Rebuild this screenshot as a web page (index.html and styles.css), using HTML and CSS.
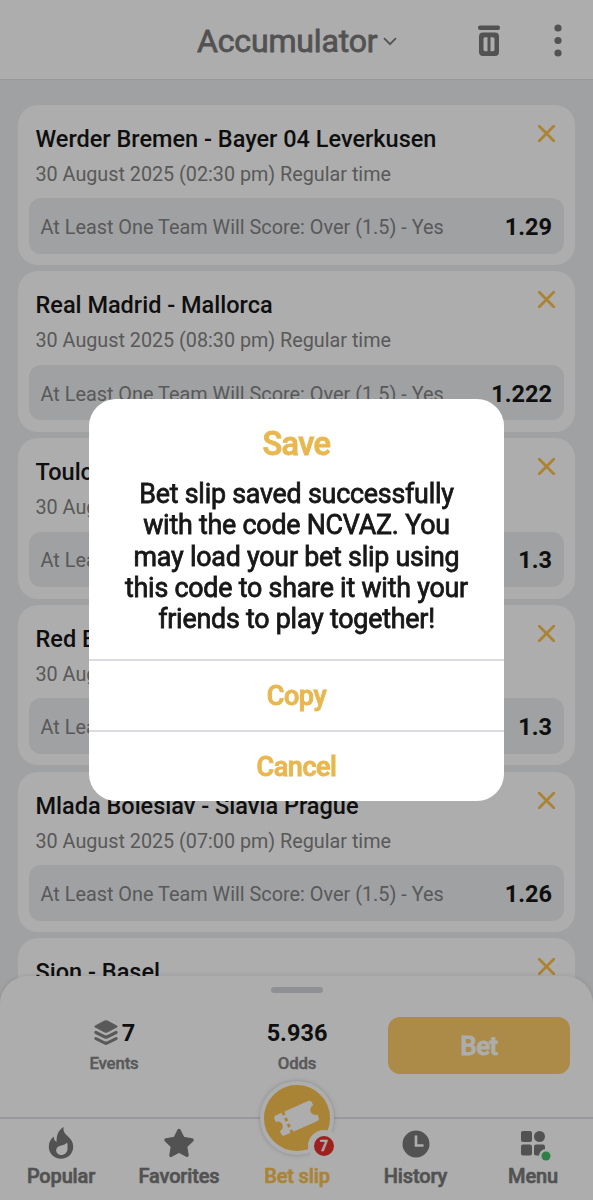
FILE: index.html
```html
<!DOCTYPE html>
<html lang="en">
<head>
    <meta charset="UTF-8">
    <title>Bet slip</title>
    <link rel="stylesheet" href="styles.css">
</head>
<body>
    <div class="app">
        <header class="topbar">
            <h1><span>Accumulator</span>
                <svg class="chevron" width="14" height="9" viewBox="0 0 14 9"><path d="M1 1.2l6 6 6-6" fill="none" stroke="currentColor" stroke-width="1.7"/></svg>
            </h1>
            <svg class="trash" width="22" height="32" viewBox="0 0 22 32"><rect x="0" y="0.5" width="22" height="4.5" rx="2"/><path fill-rule="evenodd" d="M5 7.500h12a4 4 0 0 1 4 4V27a4 4 0 0 1-4 4H5a4 4 0 0 1-4-4V11.500a4 4 0 0 1 4-4zM5.500 14v10.500a1.700 1.700 0 0 0 1.700 1.700H9.500V12.200H7.200A1.700 1.700 0 0 0 5.500 14zM12.500 12.200v14h2.300a1.700 1.700 0 0 0 1.700-1.700V14a1.700 1.700 0 0 0-1.700-1.800z"/></svg>
            <svg class="dots" width="8" height="33" viewBox="0 0 8 33"><circle cx="4" cy="4" r="3.600"/><circle cx="4" cy="16.500" r="3.600"/><circle cx="4" cy="29" r="3.600"/></svg>
        </header>

        <main class="list">
            <div class="card">
                <div class="card-top">
                    <h2>Werder Bremen - Bayer 04 Leverkusen</h2>
                    <svg class="close" viewBox="0 0 16 16"><path d="M1 1l14 14M15 1L1 15"/></svg>
                </div>
                <p class="date">30 August 2025 (02:30 pm) Regular time</p>
                <div class="pick"><span>At Least One Team Will Score: Over (1.5) - Yes</span><b>1.29</b></div>
            </div>
            <div class="card">
                <div class="card-top">
                    <h2>Real Madrid - Mallorca</h2>
                    <svg class="close" viewBox="0 0 16 16"><path d="M1 1l14 14M15 1L1 15"/></svg>
                </div>
                <p class="date">30 August 2025 (08:30 pm) Regular time</p>
                <div class="pick"><span>At Least One Team Will Score: Over (1.5) - Yes</span><b>1.222</b></div>
            </div>
            <div class="card">
                <div class="card-top">
                    <h2>Toulouse</h2>
                    <svg class="close" viewBox="0 0 16 16"><path d="M1 1l14 14M15 1L1 15"/></svg>
                </div>
                <p class="date">30 August</p>
                <div class="pick"><span>At Least</span><b>1.3</b></div>
            </div>
            <div class="card">
                <div class="card-top">
                    <h2>Red Bull</h2>
                    <svg class="close" viewBox="0 0 16 16"><path d="M1 1l14 14M15 1L1 15"/></svg>
                </div>
                <p class="date">30 August</p>
                <div class="pick"><span>At Least</span><b>1.3</b></div>
            </div>
            <div class="card">
                <div class="card-top">
                    <h2>Mlada Boleslav - Slavia Prague</h2>
                    <svg class="close" viewBox="0 0 16 16"><path d="M1 1l14 14M15 1L1 15"/></svg>
                </div>
                <p class="date">30 August 2025 (07:00 pm) Regular time</p>
                <div class="pick"><span>At Least One Team Will Score: Over (1.5) - Yes</span><b>1.26</b></div>
            </div>
            <div class="card">
                <div class="card-top">
                    <h2>Sion - Basel</h2>
                    <svg class="close" viewBox="0 0 16 16"><path d="M1 1l14 14M15 1L1 15"/></svg>
                </div>
            </div>
        </main>

        <footer class="sheet">
            <div class="handle"></div>
            <div class="summary">
                <div class="total">
                    <div class="value">
                        <svg width="24" height="25" viewBox="0 0 24 25"><path d="M10.500.6q1.500-.7 3 0l9.300 4.900q1.500 1 0 2l-9.300 4.900q-1.500.7-3 0L1.200 7.500q-1.500-1 0-2z"/><path d="M1 11q.8-.4 1.600 0l8 4q1.400.6 2.800 0l8-4q.8-.4 1.600 0 1.600 1.600-.3 2.900l-9.200 4.500q-1.500.7-3 0l-9.200-4.500Q-.6 12.600 1 11z"/><path d="M1 17.200q.8-.4 1.600 0l8 4q1.400.6 2.800 0l8-4q.8-.4 1.600 0 1.600 1.600-.3 2.900l-9.200 4.500q-1.500.7-3 0l-9.200-4.500Q-.6 18.800 1 17.200z"/></svg>
                        <b>7</b>
                    </div>
                    <span>Events</span>
                </div>
                <div class="total odds">
                    <div class="value"><b>5.936</b></div>
                    <span>Odds</span>
                </div>
                <button class="bet">Bet</button>
            </div>
            <nav class="tabs">
                <div class="tab">
                    <svg width="26" height="33" viewBox="0 0 26 33"><path fill-rule="evenodd" d="M15.500 0c-.4 4 .8 6 3.500 8.500 3.800 3.500 6.200 6.300 6.200 11.200 0 7-5.300 12-12.200 12S.8 26.500.8 19.800c0-4.500 2-8 5-10.300 0 2.700.8 4.500 2.800 5.500C8.300 8 10.500 3.200 15.500 0zM19 15.500c-2 2.500-4 2.700-6.500 3.200-3.200.7-4.600 2.700-4.300 5.300.3 2.300 2.300 4 5 4 3.500 0 6.300-2.500 6.300-6.500 0-2.300.3-4-.5-6z"/></svg>
                    <span>Popular</span>
                </div>
                <div class="tab">
                    <svg width="32" height="32" viewBox="0 0 32 32"><path d="M16 2.500l4 8.100 9 1.300-6.500 6.400 1.500 9L16 23l-8 4.300 1.500-9L3 11.900l9-1.300z" stroke="currentColor" stroke-width="3.500" stroke-linejoin="round"/></svg>
                    <span>Favorites</span>
                </div>
                <div class="tab active">
                    <div class="slip">
                        <svg width="66" height="66" viewBox="0 0 66 66"><g transform="rotate(-24 33 33)"><path d="M12 25q0-3 3-3H50q3 0 3 3v3a5 5 0 0 0 0 10v3q0 3-3 3H15q-3 0-3-3v-3a5 5 0 0 0 0-10z"/><path class="seam" d="M22.500 21.500v24"/></g></svg>
                        <span class="badge">7</span>
                    </div>
                    <span>Bet slip</span>
                </div>
                <div class="tab">
                    <svg width="28" height="30" viewBox="0 0 28 30"><circle cx="14" cy="14" r="13.500"/><path d="M14 5.500v10h7.500" fill="none" stroke="#fff" stroke-width="2.600"/></svg>
                    <span>History</span>
                </div>
                <div class="tab">
                    <svg class="menu-icon" width="24" height="30" viewBox="0 0 24 30"><rect x="0" y="1" width="11" height="11" rx="2"/><circle cx="18.500" cy="6.500" r="5.500"/><rect x="0" y="14.500" width="11" height="11" rx="2"/><rect x="13" y="14.500" width="11" height="11" rx="2"/><circle cx="25" cy="26" r="7" fill="#fff"/><circle cx="25" cy="26" r="4.500" fill="#43bd67"/></svg>
                    <span>Menu</span>
                </div>
            </nav>
        </footer>
    </div>

    <div class="overlay">
        <div class="modal">
            <h3>Save</h3>
            <p>Bet slip saved successfully<br>with the code NCVAZ. You<br>may load your bet slip using<br>this code to share it with your<br>friends to play together!</p>
            <button>Copy</button>
            <button>Cancel</button>
        </div>
    </div>
</body>
</html>
```
FILE: styles.css
```css
*{
    box-sizing: border-box;
}
body{
    margin: 0;
    font-family: Roboto, "Liberation Sans", sans-serif;
    color: #171717;
}
h1, h2, h3, p{
    margin: 0;
    white-space: nowrap;
}
svg{
    display: block;
    fill: currentColor;
    flex: none;
}
button{
    border: 0;
    padding: 0;
    font-family: inherit;
}
.app{
    position: relative;
    height: 1200px;
    overflow: hidden;
    background: #ebedf0;
}

/* top bar */
.topbar{
    display: flex;
    align-items: center;
    height: 80px;
    padding: 2px 31px 0 197px;
    background: #fff;
    border-bottom: 1px solid #e2e2e4;
    color: #7a7a7a;
}
.topbar h1{
    display: flex;
    align-items: center;
    gap: 5px;
    font-size: 32px;
    font-weight: 400;
    letter-spacing: -0.15px;
    -webkit-text-stroke: 0.8px;
}
.chevron{
    margin-top: 2px;
    -webkit-text-stroke: 0;
}
.trash{
    margin-left: auto;
    margin-right: 54px;
}

/* events */
.list{
    display: flex;
    flex-direction: column;
    gap: 6.3px;
    padding: 24.5px 18px 0 17.5px;
}
.card{
    flex: none;
    height: 160.5px;
    padding: 17px 11px 11px;
    border-radius: 20px;
    background: #fff;
}
.card-top{
    display: flex;
    justify-content: space-between;
    height: 36px;
    padding: 0 9px 0 7px;
}
.card h2{
    font-size: 23.5px;
    line-height: 35.4px;
    font-weight: 500;
}
.close{
    width: 17px;
    height: 17px;
    margin-top: 3px;
    fill: none;
    stroke: #fdc14a;
    stroke-width: 2.6;
    stroke-linecap: round;
}
.date{
    padding-left: 7px;
    height: 40.5px;
    font-size: 19.75px;
    line-height: 34.4px;
    color: #848484;
}
.pick{
    display: flex;
    align-items: center;
    justify-content: space-between;
    height: 55.5px;
    padding: 2px 12px 0;
    border-radius: 12px;
    background: #ebedf0;
    font-size: 19.85px;
    color: #848484;
    white-space: nowrap;
}
.pick span{
    padding-top: 1px;
}
.pick b{
    font-size: 23.5px;
    color: #171717;
}

/* bottom sheet */
.sheet{
    position: absolute;
    left: 0;
    right: 0;
    bottom: 0;
    height: 224px;
    border-radius: 28px 28px 0 0;
    background: #fff;
    box-shadow: 0 0 5px rgba(0, 0, 0, 0.12);
}
.handle{
    width: 52px;
    height: 6px;
    margin: 0 auto;
    border-radius: 3px;
    background: #d2d5dc;
    transform: translateY(11px);
}
.summary{
    display: flex;
    height: 135px;
    padding: 34.5px 23px 0 22px;
}
.total{
    width: 184px;
    text-align: center;
    font-size: 16.8px;
    font-weight: 500;
    color: #848484;
    letter-spacing: -0.15px;
    -webkit-text-stroke: 0.4px;
}
.odds{
    width: 182px;
}
.value{
    display: flex;
    align-items: center;
    justify-content: center;
    gap: 4px;
    height: 33px;
    margin-bottom: 3px;
    letter-spacing: 0;
    -webkit-text-stroke: 0;
}
.value svg{
    margin-top: -2px;
    margin-left: 1px;
}
.value b{
    font-size: 23.5px;
    color: #171717;
}
.bet{
    width: 182px;
    height: 57px;
    margin-left: auto;
    padding-top: 1px;
    border-radius: 12px;
    background: #fecc6b;
    color: #fff;
    font-size: 26px;
    font-weight: 500;
    letter-spacing: -0.5px;
    -webkit-text-stroke: 0.9px;
}
.tabs{
    display: grid;
    grid-template-columns: 122px 114px 122px 115px 120px;
    grid-template-rows: 80px;
    height: 83px;
    border-top: 2px solid #dfe2e9;
}
.tab{
    display: flex;
    flex-direction: column;
    align-items: center;
    justify-content: flex-end;
    padding-bottom: 11.5px;
    color: #7a7a7a;
    font-size: 20px;
    font-weight: 500;
    line-height: 24px;
    letter-spacing: -0.15px;
    white-space: nowrap;
    -webkit-text-stroke: 0.6px;
}
.tab > svg{
    margin-bottom: 4px;
    -webkit-text-stroke: 0;
}
.menu-icon{
    overflow: visible;
}
.active{
    color: #f9c350;
}
.slip{
    position: relative;
    margin-bottom: 9px;
    border: 4px solid #fff;
    border-radius: 50%;
    background: #f9c350;
    color: #fff;
    box-shadow: 0 0 4px rgba(90, 100, 120, 0.35);
}
.seam{
    fill: none;
    stroke: #f9c350;
    stroke-width: 3;
    stroke-dasharray: 3.6 3;
}
.badge{
    position: absolute;
    right: -10px;
    bottom: -11px;
    width: 32px;
    height: 32px;
    border: 6px solid #fff;
    border-radius: 50%;
    background: #e8312f;
    font-size: 14px;
    line-height: 21px;
    text-align: center;
}

/* saved dialog */
.overlay{
    position: fixed;
    inset: 0;
    display: flex;
    align-items: center;
    justify-content: center;
    background: rgba(0, 0, 0, 0.32);
}
.modal{
    width: 415px;
    height: 402px;
    overflow: hidden;
    border-radius: 27px;
    background: #fff;
    text-align: center;
}
.modal h3{
    padding-top: 26px;
    font-size: 32.5px;
    line-height: 39px;
    font-weight: 500;
    letter-spacing: -0.6px;
    color: #e9b74f;
    -webkit-text-stroke: 0.9px;
}
.modal p{
    height: 195px;
    padding-top: 15px;
    font-size: 26.8px;
    line-height: 31.3px;
    letter-spacing: -0.21px;
    -webkit-text-stroke: 0.8px;
}
.modal button{
    display: block;
    width: 100%;
    height: 71px;
    border-top: 2px solid #dcdce0;
    background: none;
    color: #e9b74f;
    font-size: 27px;
    font-weight: 500;
    letter-spacing: -0.45px;
    -webkit-text-stroke: 0.9px;
}
```
